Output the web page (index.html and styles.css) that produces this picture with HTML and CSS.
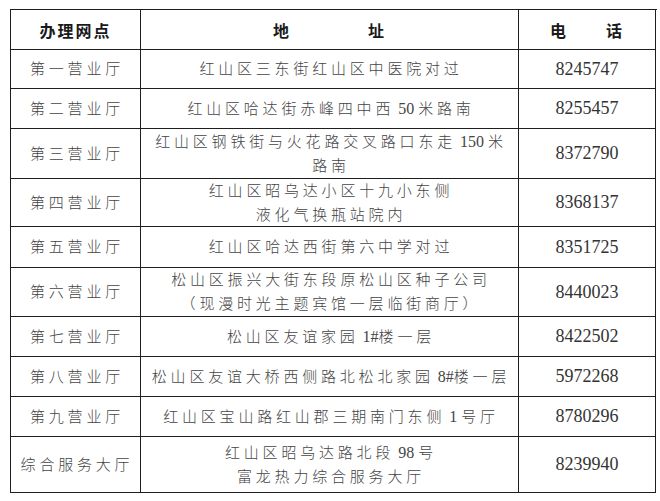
FILE: index.html
```html
<!DOCTYPE html>
<html lang="zh-CN">
<head>
<meta charset="utf-8">
<title>办理网点</title>
<link rel="stylesheet" href="styles.css">
</head>
<body>
<div class="tbl">
  <div class="c hd"><span>办理网点</span></div>
  <div class="c hd"><span>地<span class="gap-a"></span>址</span></div>
  <div class="c hd"><span>电<span class="gap-b"></span>话</span></div>

  <div class="c name"><span>第一营业厅</span></div>
  <div class="c addr"><span>红山区三东街红山区中医院对过</span></div>
  <div class="c tel"><span>8245747</span></div>

  <div class="c name"><span>第二营业厅</span></div>
  <div class="c addr"><span>红山区哈达街赤峰四中西<span class="n"> 50 </span>米路南</span></div>
  <div class="c tel"><span>8255457</span></div>

  <div class="c name"><span>第三营业厅</span></div>
  <div class="c addr"><span>红山区钢铁街与火花路交叉路口东走<span class="n"> 150 </span>米<br>路南</span></div>
  <div class="c tel"><span>8372790</span></div>

  <div class="c name"><span>第四营业厅</span></div>
  <div class="c addr"><span>红山区昭乌达小区十九小东侧<br>液化气换瓶站院内</span></div>
  <div class="c tel"><span>8368137</span></div>

  <div class="c name"><span>第五营业厅</span></div>
  <div class="c addr"><span>红山区哈达西街第六中学对过</span></div>
  <div class="c tel"><span>8351725</span></div>

  <div class="c name"><span>第六营业厅</span></div>
  <div class="c addr"><span>松山区振兴大街东段原松山区种子公司<br>（现漫时光主题宾馆一层临街商厅）</span></div>
  <div class="c tel"><span>8440023</span></div>

  <div class="c name"><span>第七营业厅</span></div>
  <div class="c addr"><span>松山区友谊家园<span class="n"> 1#</span>楼一层</span></div>
  <div class="c tel"><span>8422502</span></div>

  <div class="c name"><span>第八营业厅</span></div>
  <div class="c addr"><span>松山区友谊大桥西侧路北松北家园<span class="n"> 8#</span>楼一层</span></div>
  <div class="c tel"><span>5972268</span></div>

  <div class="c name"><span>第九营业厅</span></div>
  <div class="c addr"><span>红山区宝山路红山郡三期南门东侧<span class="n"> 1 </span>号厅</span></div>
  <div class="c tel"><span>8780296</span></div>

  <div class="c name"><span>综合服务大厅</span></div>
  <div class="c addr"><span>红山区昭乌达路北段<span class="n"> 98 </span>号<br>富龙热力综合服务大厅</span></div>
  <div class="c tel"><span>8239940</span></div>
</div>
</body>
</html>
```

FILE: styles.css
```css
html, body {
  margin: 0;
  padding: 0;
  background: #ffffff;
}

body {
  font-family: "Liberation Serif", "Noto Sans CJK SC", serif;
  color: #444444;
}

.tbl {
  margin: 9px 0 0 10px;
  width: 646px;
  display: grid;
  grid-template-columns: 130px 378px 137px;
  grid-template-rows: 40px 39px 40px 50px 48px 41px 49px 40px 40px 40px 56px;
  border-top: 1px solid #1e1e1e;
  border-left: 1px solid #1e1e1e;
}

.c {
  display: flex;
  align-items: center;
  justify-content: center;
  text-align: center;
  border-right: 1px solid #1e1e1e;
  border-bottom: 1px solid #1e1e1e;
  white-space: nowrap;
}

.hd {
  font-family: "Noto Sans CJK SC", sans-serif;
  font-weight: 700;
  font-size: 16px;
  letter-spacing: 2px;
  color: #1a1a1a;
}

.gap-a {
  display: inline-block;
  width: 77px;
}

.gap-b {
  display: inline-block;
  width: 38px;
}

.name,
.addr {
  font-size: 15px;
  font-weight: 300;
  letter-spacing: 3.8px;
  line-height: 24px;
  padding-left: 3px;
}

.n {
  letter-spacing: 0;
  font-size: 16px;
}

.tel {
  font-size: 18px;
  letter-spacing: 0;
  color: #333;
}
```
